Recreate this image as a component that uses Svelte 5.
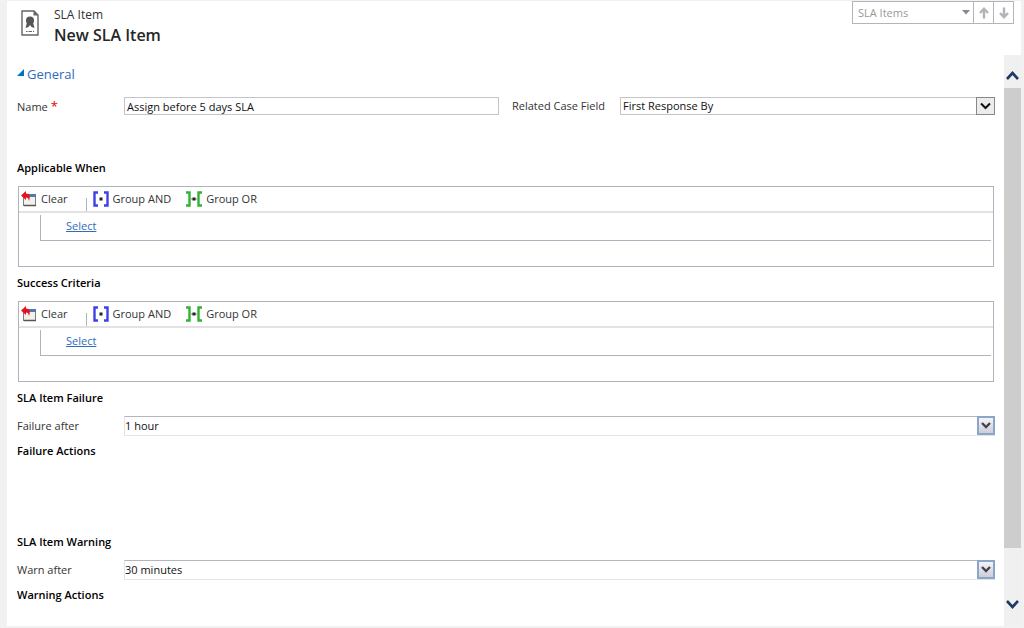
<script lang="ts">
  let name = 'Assign before 5 days SLA';
  let caseField = 'First Response By';

  const criteria = ['Applicable When', 'Success Criteria'];

  const timers = [
    { id: 'failure', title: 'SLA Item Failure', label: 'Failure after', value: '1 hour', actions: 'Failure Actions' },
    { id: 'warning', title: 'SLA Item Warning', label: 'Warn after', value: '30 minutes', actions: 'Warning Actions' },
  ];
</script>

<div class="window">
  <header>
    <svg class="entity-icon" width="18" height="26" viewBox="0 0 18 26">
      <path d="M1 1H13L17 5V25H1Z" fill="#fff" stroke="#666" stroke-width="1.4" />
      <path d="M12.5 .5L17.5 5.5H12.5Z" fill="#666" />
      <circle cx="9" cy="10.5" r="4" fill="#555" />
      <path d="M6 12.500L4.500 18L7.500 17L9 15L10.500 17L13.500 18L12 12.500Z" fill="#555" />
      <path d="M5 21.500H6.500M7.500 21.500H11M12 21.500H13" stroke="#666" />
    </svg>
    <div class="titles">
      <div class="entity">SLA Item</div>
      <h1>New SLA Item</h1>
    </div>
    <div class="navigator">
      <button class="related">
        SLA Items
        <svg width="8" height="5" viewBox="0 0 8 5"><path d="M0 0H8L4 4.500Z" fill="#888" /></svg>
      </button>
      <button class="step" aria-label="Previous record">
        <svg width="10" height="12" viewBox="0 0 10 12"><path d="M5 11.500V2M1 6L5 1.800L9 6" fill="none" stroke="#b4b4b4" stroke-width="2.400" /></svg>
      </button>
      <button class="step" aria-label="Next record">
        <svg width="10" height="12" viewBox="0 0 10 12"><path d="M5 .5V10M1 6L5 10.200L9 6" fill="none" stroke="#b4b4b4" stroke-width="2.400" /></svg>
      </button>
    </div>
  </header>

  <div class="body">
    <form>
      <button type="button" class="section">
        <svg width="7" height="7" viewBox="0 0 7 7"><path d="M7 0V7H0Z" fill="#0072c6" /></svg>
        General
      </button>

      <div class="fields">
        <label for="name">Name <span class="required">*</span></label>
        <input id="name" type="text" bind:value={name} />
        <label class="second" for="case-field">Related Case Field</label>
        <div class="dropdown classic">
          <select id="case-field" bind:value={caseField}>
            <option>First Response By</option>
          </select>
          <span class="arrow">
            <svg width="11" height="8" viewBox="0 0 11 8"><path d="M1 1.500L5.500 6L10 1.500" fill="none" stroke="#111" stroke-width="2" /></svg>
          </span>
        </div>
      </div>

      {#each criteria as title}
        <h2>{title}</h2>
        <div class="criteria">
          <div class="toolbar">
            <button type="button" class="clear">
              <svg width="16" height="16" viewBox="0 0 16 16">
                <rect x="2.500" y="3.500" width="12" height="11" fill="#f4f1ea" stroke="#777f8f" />
                <path d="M3 14.500H15" stroke="#555" stroke-width="1.500" />
                <rect x="7" y="3" width="8" height="3" fill="#5874b0" />
                <path d="M0 4.500L5 0V2.500C9 2.500 9.500 6 8 10C7.500 7.500 7 6.500 5 6.500V9Z" fill="#e8101c" />
              </svg>
              Clear
            </button>
            <button type="button" class="and">
              <svg width="16" height="16" viewBox="0 0 16 16">
                <path d="M5 1.500H1.500V14.500H5M11 1.500H14.500V14.500H11" fill="none" stroke="#4040e8" stroke-width="2.400" />
                <rect x="6.500" y="6.500" width="3" height="3" fill="#222" />
              </svg>
              Group AND
            </button>
            <button type="button">
              <svg width="16" height="16" viewBox="0 0 16 16">
                <path d="M0 1.500H3.500V14.500H0M16 1.500H12.500V14.500H16" fill="none" stroke="#34b034" stroke-width="2.400" />
                <path d="M5 8H11" stroke="#888" />
                <rect x="6.500" y="6.500" width="3" height="3" fill="#222" />
              </svg>
              Group OR
            </button>
          </div>
          <div class="clause"><a href="#select">Select</a></div>
        </div>
      {/each}

      {#each timers as timer}
        <h2>{timer.title}</h2>
        <div class="timer">
          <label for={timer.id}>{timer.label}</label>
          <div class="dropdown combo">
            <select id={timer.id}>
              <option>{timer.value}</option>
            </select>
            <span class="arrow">
              <svg width="10" height="7" viewBox="0 0 10 7"><path d="M1 1L5 5L9 1" fill="none" stroke="#444" stroke-width="2.400" /></svg>
            </span>
          </div>
        </div>
        <h3>{timer.actions}</h3>
      {/each}
    </form>

    <div class="scrollbar">
      <svg class="up" width="13" height="9" viewBox="0 0 13 9"><path d="M1 8L6.500 2L12 8" fill="none" stroke="#1f3a60" stroke-width="2.600" /></svg>
      <div class="thumb"></div>
      <svg class="down" width="13" height="9" viewBox="0 0 13 9"><path d="M1 1L6.500 7L12 1" fill="none" stroke="#1f3a60" stroke-width="2.600" /></svg>
    </div>
  </div>
</div>

<style>
  :global(body) {
    background: #f1f1f1;
  }

  :global(#app) {
    display: flex;
    min-height: 100vh;
    box-sizing: border-box;
    padding: 1px 3px 2px 7px;
  }

  .window {
    flex: 1;
    display: flex;
    flex-direction: column;
    background: #fff;
    color: #333;
    font: 11px/16px "Open Sans", "Segoe UI", sans-serif;
  }

  button,
  input,
  select {
    box-sizing: border-box;
    margin: 0;
    font: inherit;
    color: inherit;
  }

  button {
    display: flex;
    align-items: center;
    padding: 0;
    border: 0;
    background: none;
    white-space: nowrap;
  }

  svg {
    flex: none;
  }

  header {
    display: flex;
    height: 54px;
  }

  .entity-icon {
    margin: 9px 15px 0 14px;
  }

  .titles {
    flex: 1;
    padding-top: 5px;
  }

  .entity {
    font-size: 12px;
    line-height: 18px;
  }

  h1 {
    margin: 0;
    color: #262626;
    font-size: 16px;
    font-weight: 600;
    line-height: 22px;
  }

  .navigator {
    display: flex;
    height: 23px;
    margin-right: 7px;
    box-sizing: border-box;
    border: 1px solid #b0b5be;
    color: #999;
  }

  .related {
    width: 120px;
    justify-content: space-between;
    padding: 0 3px 0 5px;
  }

  .step {
    width: 20px;
    justify-content: center;
    border-left: 1px solid #b0b5be;
  }

  .body {
    flex: 1;
    display: flex;
  }

  form {
    flex: 1;
    padding: 9px 9px 15px 10px;
  }

  .section {
    gap: 3px;
    color: #2f6cbb;
    font-size: 13px;
    line-height: 20px;
  }

  .section svg {
    margin-bottom: 4px;
  }

  .fields {
    display: grid;
    grid-template-columns: 107px 1fr 121px 1fr;
    align-items: center;
    margin: 13px 0 45px;
  }

  .second {
    padding-left: 13px;
  }

  .required {
    color: #e00000;
    font-size: 13px;
  }

  input {
    width: 100%;
    height: 18px;
    padding: 0 2px;
    border: 1px solid #c4c4c8;
    background: #fff;
    color: #111;
  }

  .dropdown {
    display: grid;
    grid-template-columns: 1fr auto;
  }

  select {
    grid-area: 1 / 1 / 2 / 3;
    width: 100%;
    height: 18px;
    padding: 0 2px;
    border: 1px solid #c4c4c8;
    border-radius: 0;
    background: #fff;
    color: #111;
    appearance: none;
  }

  .arrow {
    grid-area: 1 / 2;
    display: flex;
    align-items: center;
    justify-content: center;
    width: 19px;
    box-sizing: border-box;
    pointer-events: none;
    z-index: 1;
  }

  .classic .arrow {
    border: 1px solid #888;
    background: #ececec;
  }

  .combo select {
    height: 20px;
    padding: 0;
    border-color: #b5b5bd #e3e3ea #e3e3ea;
  }

  .combo .arrow {
    width: 18px;
    height: 19px;
    border: 2px solid #8aa6ca;
    background: linear-gradient(#f4f4f8, #ccccdc);
  }

  h2,
  h3 {
    margin: 0;
    color: #000;
    font-size: 11px;
    font-weight: 600;
    line-height: 16px;
  }

  h2 {
    margin-bottom: 10px;
  }

  h3 {
    margin-top: 7px;
  }

  h3:not(:last-child) {
    margin-bottom: 75px;
  }

  .criteria {
    height: 81px;
    margin: 0 1px 8px;
    box-sizing: border-box;
    border: 1px solid #aeb4be;
  }

  .toolbar {
    display: flex;
    height: 26px;
    box-sizing: border-box;
    border-bottom: 2px solid #e2e2e2;
  }

  .toolbar button {
    gap: 4px;
    margin-right: 15px;
  }

  .toolbar .clear {
    margin: 0 18px 0 2px;
  }

  .toolbar .and::before {
    content: "";
    align-self: flex-end;
    width: 1px;
    height: 13px;
    margin-right: 2px;
    background: #aeb4be;
  }

  .clause {
    height: 26px;
    margin: 2px 2px 0 21px;
    padding: 3px 0 0 25px;
    box-sizing: border-box;
    border: solid #aeb4be;
    border-width: 0 0 1px 1px;
  }

  a {
    color: #2f6cbb;
  }

  .timer {
    display: grid;
    grid-template-columns: 107px 1fr;
    align-items: center;
  }

  .scrollbar {
    display: flex;
    flex-direction: column;
    align-items: center;
    width: 17px;
    background: #f0f0f0;
  }

  .up {
    margin: 16px 0 8px;
  }

  .thumb {
    width: 100%;
    flex: 0 0 80.5%;
    background: #cdcdcd;
  }

  .down {
    margin: auto 0 17px;
  }
</style>
